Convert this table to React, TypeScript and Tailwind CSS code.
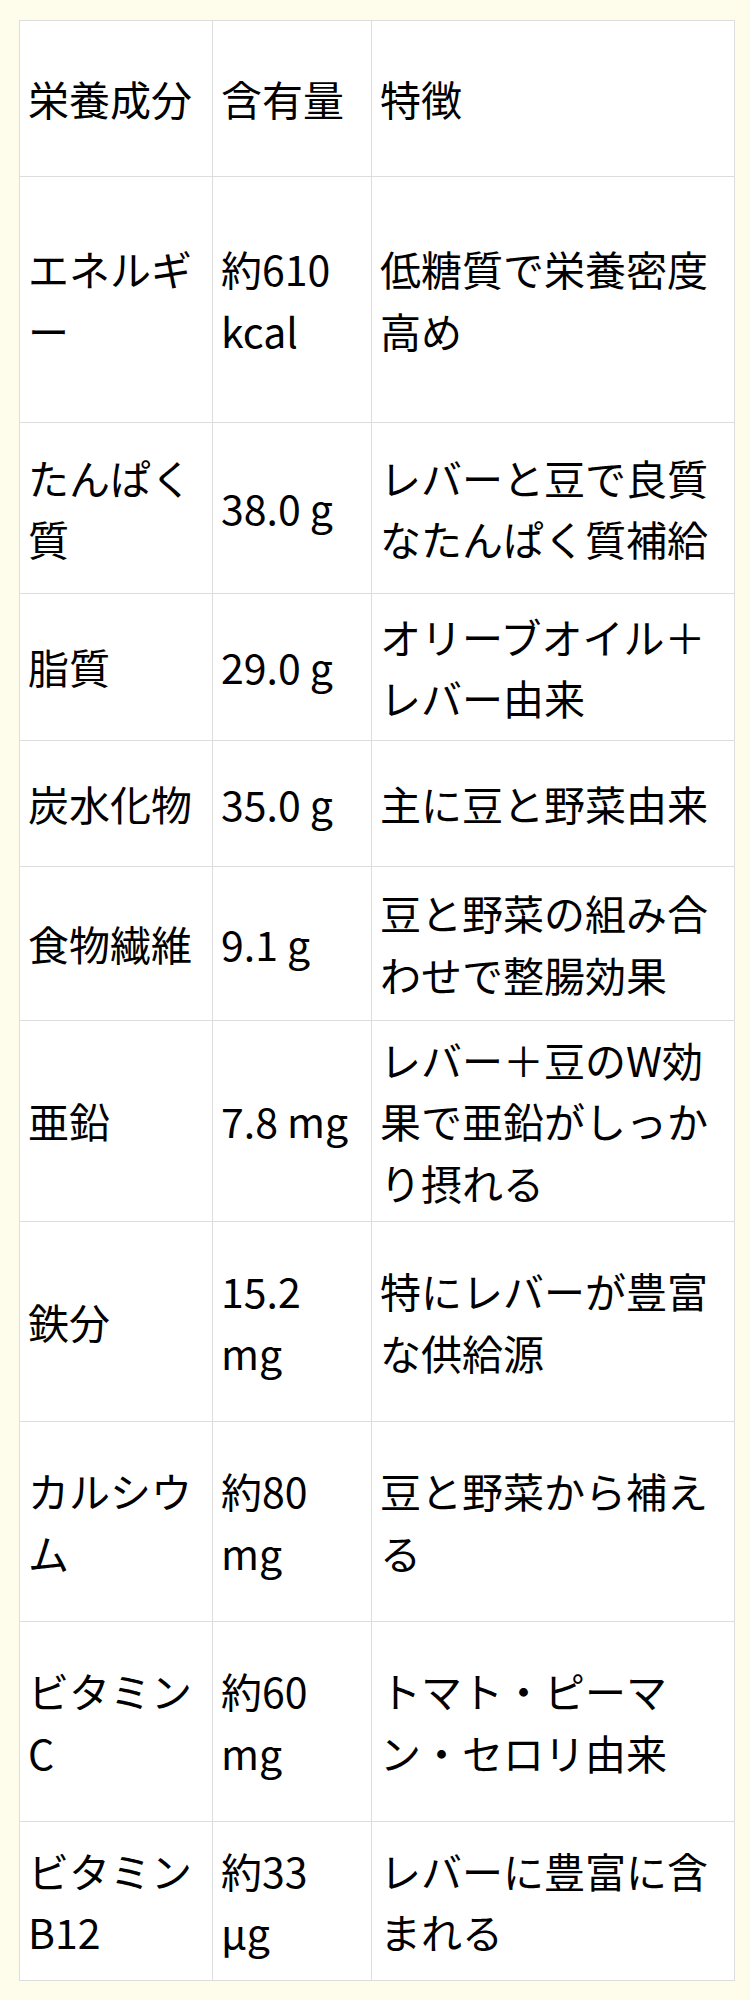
const rows = [
  { name: "エネルギー", amount: "約610 kcal", note: "低糖質で栄養密度高め", h: "h-[246px]" },
  { name: "たんぱく質", amount: "38.0 g", note: "レバーと豆で良質なたんぱく質補給", h: "h-[171px]" },
  { name: "脂質", amount: "29.0 g", note: "オリーブオイル＋レバー由来", h: "h-[147px]" },
  { name: "炭水化物", amount: "35.0 g", note: "主に豆と野菜由来", h: "h-[126px]" },
  { name: "食物繊維", amount: "9.1 g", note: "豆と野菜の組み合わせで整腸効果", h: "h-[154px]" },
  { name: "亜鉛", amount: "7.8 mg", note: "レバー＋豆のW効果で亜鉛がしっかり摂れる", h: "h-[201px]" },
  { name: "鉄分", amount: "15.2 mg", note: "特にレバーが豊富な供給源", h: "h-[200px]" },
  { name: "カルシウム", amount: "約80 mg", note: "豆と野菜から補える", h: "h-[200px]" },
  { name: "ビタミンC", amount: "約60 mg", note: "トマト・ピーマン・セロリ由来", h: "h-[200px]" },
  { name: "ビタミンB12", amount: "約33 µg", note: "レバーに豊富に含まれる", h: "h-[159px]" },
];

const cell = "border border-[#dddddd] px-2 align-middle font-normal text-left";

export default function App() {
  return (
    <div className="min-h-[2000px] bg-[#fefcea] pt-[20px] pl-[19px] font-['Noto_Sans_CJK_JP',sans-serif] text-[41px] leading-[1.5] text-black">
      <table className="w-[716px] table-fixed border-collapse bg-white">
        <colgroup>
          <col className="w-[193px]" />
          <col className="w-[159px]" />
          <col />
        </colgroup>
        <thead>
          <tr className="h-[156px]">
            <th className={cell}>栄養成分</th>
            <th className={cell}>含有量</th>
            <th className={cell}>特徴</th>
          </tr>
        </thead>
        <tbody>
          {rows.map((r) => (
            <tr key={r.name} className={r.h}>
              <td className={cell}>{r.name}</td>
              <td className={cell}>{r.amount}</td>
              <td className={cell}>{r.note}</td>
            </tr>
          ))}
        </tbody>
      </table>
    </div>
  );
}
